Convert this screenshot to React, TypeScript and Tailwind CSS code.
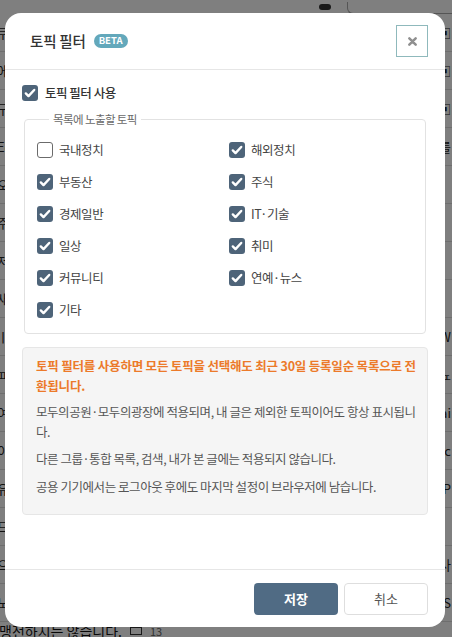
import { useState } from 'react';

const font = { fontFamily: '"Noto Sans CJK KR", "Noto Sans", sans-serif' };

const TOPICS = [
  { id: 'domestic', label: '국내정치' },
  { id: 'world', label: '해외정치' },
  { id: 'realestate', label: '부동산' },
  { id: 'stock', label: '주식' },
  { id: 'economy', label: '경제일반' },
  { id: 'it', label: 'IT·기술' },
  { id: 'daily', label: '일상' },
  { id: 'hobby', label: '취미' },
  { id: 'community', label: '커뮤니티' },
  { id: 'news', label: '연예·뉴스' },
  { id: 'etc', label: '기타' },
];

const BG_ROWS = [
  ['쿠폰 이벤트 참여 후기', '▣'],
  ['에어컨 청소 업체 추천 부탁드립니다', '▣'],
  ['구독 서비스 정리했습니다', '▣'],
  ['Edge 브라우저 업데이트 이후', '를'],
  ['오늘 점심 메뉴', ''],
  ['주말 나들이 장소', ''],
  ['저녁 산책길', ''],
  ['새로 산 키보드', ''],
  ['ㅣ 요즘 읽는 책', 'lW'],
  ['ㅍ 판교 맛집', '뇨'],
  ['여행 사진 정리', 'ai'],
  ['이사 준비 체크리스트', '-c'],
  ['유튜브 채널 추천', 'sP'],
  ['드라마 정주행 중', ''],
  ['으 출근길 지하철', '사'],
  ['노트북 구매 고민', 'IS'],
];

function Check({ checked, onClick }: { checked: boolean; onClick: () => void }) {
  return (
    <button
      type="button"
      onClick={onClick}
      className={
        checked
          ? 'flex h-4 w-4 shrink-0 items-center justify-center rounded-[3px] bg-[#4e6479]'
          : 'flex h-4 w-4 shrink-0 items-center justify-center rounded-[3px] border border-[#6b6b6b] bg-white'
      }
    >
      {checked && (
        <svg viewBox="0 0 16 16" className="h-4 w-4" fill="none">
          <path d="M3.8 8.4l2.7 2.7L12.2 5" stroke="#fff" strokeWidth="2.4" strokeLinecap="round" strokeLinejoin="round" />
        </svg>
      )}
    </button>
  );
}

export default function App() {
  const [enabled, setEnabled] = useState(true);
  const [sel, setSel] = useState<Record<string, boolean>>(() => {
    const s: Record<string, boolean> = {};
    TOPICS.forEach((t) => (s[t.id] = t.id !== 'domestic'));
    return s;
  });

  return (
    <div className="relative h-[637px] w-[452px] overflow-hidden bg-white" style={font}>
      {/* page behind the dialog */}
      <div className="flex h-[14px] items-end justify-end gap-4">
        <div className="mb-[4px] h-[6px] w-[12px] rounded-sm bg-[#333]" />
        <div className="h-[12px] w-[105px] rounded-bl-md border-b border-l border-[#aaa]" />
      </div>
      <div className="flex flex-col">
        {BG_ROWS.map(([l, r], i) => (
          <div key={i} className="flex h-[38px] items-center justify-between border-b border-[#ddd] text-[13px] text-[#222]">
            <span className="-ml-[3px]">{l}</span>
            <span className="pr-[1px]">{r}</span>
          </div>
        ))}
      </div>
      <div className="absolute bottom-0 left-0 flex h-[12px] items-center gap-2 text-[14px] text-[#111]">
        <span className="-ml-[1px] leading-none">맹전하시는 않습니다.</span>
        <span className="h-[8px] w-[12px] border border-[#333]" />
        <span className="text-[11px] text-[#666]">13</span>
      </div>

      {/* overlay */}
      <div className="absolute inset-0 bg-black/50">
        <div className="ml-[5px] mt-[13px] flex w-[440px] flex-col overflow-hidden rounded-[16px] bg-white">
          {/* header */}
          <div className="flex items-center justify-between border-b border-[#e6e6e6] py-3 pl-[25px] pr-[17px]">
            <div className="flex items-center gap-2">
              <h2 className="text-[14.5px] font-medium tracking-[-0.2px] text-[#333]">토픽 필터</h2>
              <span className="flex h-[14px] items-center rounded-full bg-[#63a8bb] px-[5px] text-[9.5px] font-bold leading-none text-white">
                BETA
              </span>
            </div>
            <button type="button" className="flex h-8 w-8 items-center justify-center border border-[#8fb9bc] bg-white">
              <svg viewBox="0 0 10 10" className="h-[9px] w-[9px]">
                <path d="M1.5 1.5l7 7M8.5 1.5l-7 7" stroke="#909090" strokeWidth="2.8" strokeLinecap="round" />
              </svg>
            </button>
          </div>

          {/* body */}
          <div className="px-[17px] pb-[54px] pt-[15px]">
            <label className="flex h-4 items-center gap-[7px]">
              <Check checked={enabled} onClick={() => setEnabled(!enabled)} />
              <span className="text-[12.5px] font-medium tracking-[-0.5px] text-[#333]">토픽 필터 사용</span>
            </label>

            <fieldset className="mx-[2px] mt-[9px] rounded-[4px] border border-[#e2e2e2] px-3 pb-[7px] pt-[6px]">
              <legend className="ml-3 px-1 text-[11.5px] leading-[18px] tracking-[-0.6px] text-[#6a6a6a]">
                목록에 노출할 토픽
              </legend>
              <div className="grid grid-cols-2 gap-x-2">
                {TOPICS.map((t) => (
                  <label key={t.id} className="flex h-8 items-center gap-[6px]">
                    <Check checked={sel[t.id]} onClick={() => setSel({ ...sel, [t.id]: !sel[t.id] })} />
                    <span className="text-[12.5px] tracking-[-0.45px] text-[#444]">{t.label}</span>
                  </label>
                ))}
              </div>
            </fieldset>

            <div className="mt-[13px] rounded-[4px] border border-[#e6e6e6] bg-[#f5f5f5] pb-[18px] pl-[13px] pr-2 pt-2 text-[12.5px] leading-[19.5px] tracking-[-0.45px] text-[#555]">
              <p className="whitespace-nowrap font-bold tracking-[-0.2px] text-[#ec7a2a]">
                토픽 필터를 사용하면 모든 토픽을 선택해도 최근 30일 등록일순 목록으로 전<br />
                환됩니다.
              </p>
              <p className="mt-[7px] whitespace-nowrap">
                모두의공원·모두의광장에 적용되며, 내 글은 제외한 토픽이어도 항상 표시됩니<br />
                다.
              </p>
              <p className="mt-2">다른 그룹·통합 목록, 검색, 내가 본 글에는 적용되지 않습니다.</p>
              <p className="mt-2">공용 기기에서는 로그아웃 후에도 마지막 설정이 브라우저에 남습니다.</p>
            </div>
          </div>

          {/* footer */}
          <div className="flex justify-end gap-[6px] border-t border-[#e6e6e6] px-[17px] pb-3 pt-[13px]">
            <button type="button" className="h-8 w-[84px] rounded-[4px] bg-[#506b84] text-[13px] font-bold text-white">
              저장
            </button>
            <button type="button" className="h-8 w-[84px] rounded-[4px] border border-[#dedede] bg-white text-[13px] text-[#555]">
              취소
            </button>
          </div>
        </div>
      </div>
    </div>
  );
}
